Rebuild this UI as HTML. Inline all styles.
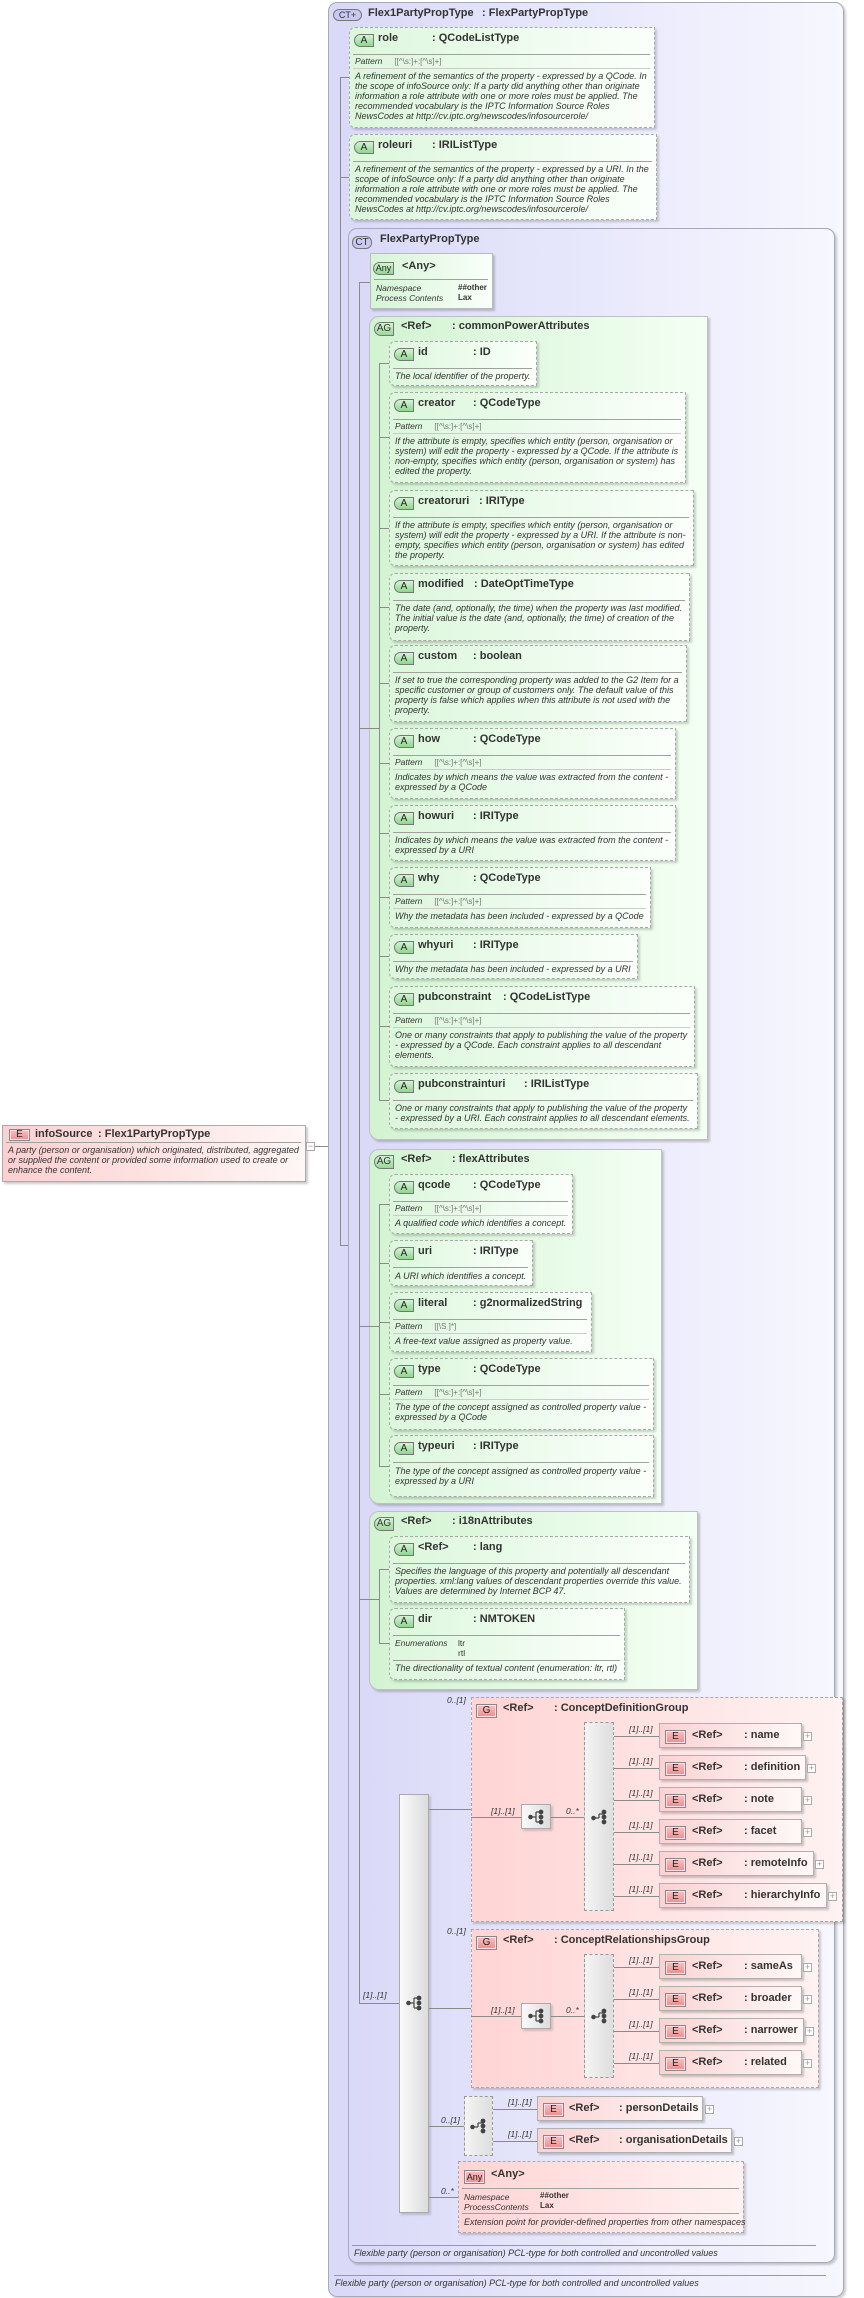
<!DOCTYPE html>
<html><head><meta charset="utf-8"><style>
body{margin:0;width:864px;height:2298px;position:relative;overflow:hidden;background:#fff;font-family:"Liberation Sans",Arial,sans-serif;color:#333}
div,span{box-sizing:border-box}
.p{position:absolute}
.ct{position:absolute;border:1px solid #a8a8b8;border-radius:9px;background:linear-gradient(90deg,#d9d9f8,#f7f7ff);box-shadow:2px 2px 2px rgba(0,0,0,.2)}
.ag{position:absolute;border:1px solid #c0c0c0;border-radius:10px 0 0 10px;background:linear-gradient(90deg,#d2f3d2,#f4fff4);box-shadow:2px 2px 2px rgba(0,0,0,.2)}
.ab{position:absolute;border:1px dashed #a8a8a8;border-radius:6px 0 0 6px;background:linear-gradient(90deg,#dcf7dc,#fbfffb);box-shadow:2px 2px 2px rgba(0,0,0,.18)}
.gb{position:absolute;border:1px dashed #a8a8a8;background:linear-gradient(90deg,#ffd4d4,#fff2f2);box-shadow:2px 2px 2px rgba(0,0,0,.18)}
.eb{position:absolute;border:1px solid #b0b0b0;height:25px;background:linear-gradient(90deg,#fbd2d2,#fff8f8);box-shadow:2px 2px 2px rgba(0,0,0,.2)}
.n{position:absolute;top:4px;left:28px;font-weight:bold;font-size:11px;white-space:nowrap;color:#333}
.t{position:absolute;top:4px;font-weight:bold;font-size:11px;white-space:nowrap;color:#333}
.s{position:absolute;left:3px;right:4px;height:0;border-top:1px solid #a0a0a0}
.pt{position:absolute;left:5px;top:28px;font-size:8.5px;font-style:italic;white-space:nowrap}
.pt span{font-style:normal;color:#777;margin-left:12px;font-size:8px}
.d{position:absolute;left:5px;font-size:9px;line-height:10px;font-style:italic;white-space:nowrap;color:#333}
.bA{position:absolute;left:4px;top:6px;width:20px;height:13px;border:1px solid #777;border-radius:7px 0 0 7px;background:linear-gradient(#d4f4d4,#8fd68f);font-size:10px;line-height:11px;text-align:center;color:#222}
.bE{position:absolute;left:5px;top:6px;width:21px;height:14px;border:1px solid #888;background:linear-gradient(#f9c0c0,#ee8e8e);box-shadow:inset 0 0 0 1px #fde;font-size:10px;line-height:12px;text-align:center;color:#222}
.h{position:absolute;height:1px;background:#8a8a8a}
.v{position:absolute;width:1px;background:#8a8a8a}
.l{position:absolute;font-size:8.5px;font-style:italic;white-space:nowrap;color:#333}
.pl{position:absolute;width:9px;height:9px;border:1px solid #aaa;background:#fff;font-size:9px;line-height:7px;text-align:center;color:#999}
.bar{position:absolute;border:1px solid #aaa;background:linear-gradient(90deg,#fafafa,#dcdcdc);box-shadow:2px 2px 2px rgba(0,0,0,.15)}
.dbar{position:absolute;border:1px dashed #999;background:linear-gradient(90deg,#f4f4f4,#dedede)}
.ic{position:absolute}
</style></head><body>

<!-- infoSource -->
<div class="p" style="left:2px;top:1125px;width:304px;height:57px;border:1px solid #aaa;background:linear-gradient(90deg,#fcd0d0,#fff6f6);box-shadow:2px 2px 2px rgba(0,0,0,.2)">
<div class="bE" style="left:6px;top:3px;height:12px;line-height:10px">E</div>
<div class="n" style="left:32px;top:2px;font-size:11px">infoSource</div>
<div class="t" style="left:95px;top:2px;font-size:11px">: Flex1PartyPropType</div>
<div class="s" style="top:16px"></div>
<div class="d" style="top:19px">A party (person or organisation) which originated, distributed, aggregated<br>or supplied the content or provided some information used to create or<br>enhance the content.</div>
</div>
<div class="pl" style="left:306px;top:1142px">−</div>
<div class="h" style="left:315px;top:1146px;width:25px"></div>

<!-- outer CT -->
<div class="ct" style="left:328px;top:2px;width:516px;height:2295px"></div>
<div class="p" style="left:333px;top:9px;width:29px;height:12px;border:1px solid #777;border-radius:6px;background:#c8c8f0;font-size:9px;line-height:10px;text-align:center">CT+</div>
<div class="p" style="left:368px;top:7px;font-weight:bold;font-size:11px;white-space:nowrap">Flex1PartyPropType</div>
<div class="p" style="left:482px;top:7px;font-weight:bold;font-size:11px;white-space:nowrap">: FlexPartyPropType</div>
<div class="v" style="left:340px;top:77px;height:1169px"></div>
<div class="h" style="left:340px;top:77px;width:9px"></div>
<div class="h" style="left:340px;top:177px;width:9px"></div>

<div class="ab" style="left:349px;top:27px;width:306px;height:101px">
<div class="bA">A</div><div class="n">role</div><div class="t" style="left:82px">: QCodeListType</div>
<div class="s" style="top:26px"></div><div class="pt">Pattern<span>[[^\s:]+:[^\s]+]</span></div><div class="s" style="top:40px;border-color:#ccc"></div>
<div class="d" style="top:43px">A refinement of the semantics of the property - expressed by a QCode. In<br>the scope of infoSource only: If a party did anything other than originate<br>information a role attribute with one or more roles must be applied. The<br>recommended vocabulary is the IPTC Information Source Roles<br>NewsCodes at http://cv.iptc.org/newscodes/infosourcerole/</div>
</div>
<div class="ab" style="left:349px;top:134px;width:308px;height:86px">
<div class="bA">A</div><div class="n">roleuri</div><div class="t" style="left:82px">: IRIListType</div>
<div class="s" style="top:26px"></div>
<div class="d" style="top:29px">A refinement of the semantics of the property - expressed by a URI. In the<br>scope of infoSource only: If a party did anything other than originate<br>information a role attribute with one or more roles must be applied. The<br>recommended vocabulary is the IPTC Information Source Roles<br>NewsCodes at http://cv.iptc.org/newscodes/infosourcerole/</div>
</div>

<!-- inner CT -->
<div class="ct" style="left:348px;top:228px;width:487px;height:2035px"></div>
<div class="h" style="left:340px;top:1245px;width:8px"></div>
<div class="p" style="left:352px;top:236px;width:20px;height:13px;border:1px solid #777;border-radius:6px;background:#c8c8f0;font-size:10px;line-height:11px;text-align:center">CT</div>
<div class="p" style="left:380px;top:233px;font-weight:bold;font-size:11px">FlexPartyPropType</div>
<div class="v" style="left:359px;top:282px;height:1722px"></div>

<!-- Any green -->
<div class="p" style="left:370px;top:253px;width:123px;height:56px;border:1px solid #bbb;background:linear-gradient(90deg,#d6f5d6,#fafffa);box-shadow:2px 2px 2px rgba(0,0,0,.2)">
<div class="bA" style="left:2px;top:8px;width:21px;font-size:9px">Any</div>
<div class="n" style="left:31px;top:6px">&lt;Any&gt;</div>
<div class="s" style="top:25px"></div>
<div class="d" style="top:29px;font-size:8.5px">Namespace<br>Process Contents</div>
<div class="p" style="left:87px;top:29px;font-size:8px;line-height:10px;font-weight:bold">##other<br>Lax</div>
</div>
<div class="h" style="left:359px;top:282px;width:11px"></div>

<!-- commonPowerAttributes -->
<div class="ag" style="left:369px;top:316px;width:339px;height:824px"></div>
<div class="p" style="left:374px;top:322px;width:20px;height:14px;border:1px solid #777;border-radius:7px 0 0 7px;background:linear-gradient(#d4f4d4,#9ad89a);font-size:10px;line-height:12px;text-align:center">AG</div>
<div class="p" style="left:401px;top:320px;font-weight:bold;font-size:11px">&lt;Ref&gt;</div>
<div class="p" style="left:452px;top:320px;font-weight:bold;font-size:11px">: commonPowerAttributes</div>
<div class="h" style="left:359px;top:728px;width:20px"></div>
<div class="v" style="left:379px;top:363px;height:738px"></div>
<div class="h" style="left:379px;top:363px;width:10px"></div>
<div class="h" style="left:379px;top:437px;width:10px"></div>
<div class="h" style="left:379px;top:528px;width:10px"></div>
<div class="h" style="left:379px;top:607px;width:10px"></div>
<div class="h" style="left:379px;top:683px;width:10px"></div>
<div class="h" style="left:379px;top:763px;width:10px"></div>
<div class="h" style="left:379px;top:833px;width:10px"></div>
<div class="h" style="left:379px;top:897px;width:10px"></div>
<div class="h" style="left:379px;top:956px;width:10px"></div>
<div class="h" style="left:379px;top:1026px;width:10px"></div>
<div class="h" style="left:379px;top:1100px;width:10px"></div>

<div class="ab" style="left:389px;top:341px;width:148px;height:45px"><div class="bA">A</div><div class="n">id</div><div class="t" style="left:83px">: ID</div><div class="s" style="top:26px"></div>
<div class="d" style="top:29px">The local identifier of the property.</div></div>

<div class="ab" style="left:389px;top:392px;width:297px;height:91px"><div class="bA">A</div><div class="n">creator</div><div class="t" style="left:83px">: QCodeType</div><div class="s" style="top:26px"></div><div class="pt">Pattern<span>[[^\s:]+:[^\s]+]</span></div><div class="s" style="top:40px;border-color:#ccc"></div>
<div class="d" style="top:43px">If the attribute is empty, specifies which entity (person, organisation or<br>system) will edit the property - expressed by a QCode. If the attribute is<br>non-empty, specifies which entity (person, organisation or system) has<br>edited the property.</div></div>

<div class="ab" style="left:389px;top:490px;width:305px;height:76px"><div class="bA">A</div><div class="n">creatoruri</div><div class="t" style="left:89px">: IRIType</div><div class="s" style="top:26px"></div>
<div class="d" style="top:29px">If the attribute is empty, specifies which entity (person, organisation or<br>system) will edit the property - expressed by a URI. If the attribute is non-<br>empty, specifies which entity (person, organisation or system) has edited<br>the property.</div></div>

<div class="ab" style="left:389px;top:573px;width:301px;height:68px"><div class="bA">A</div><div class="n">modified</div><div class="t" style="left:84px">: DateOptTimeType</div><div class="s" style="top:26px"></div>
<div class="d" style="top:29px">The date (and, optionally, the time) when the property was last modified.<br>The initial value is the date (and, optionally, the time) of creation of the<br>property.</div></div>

<div class="ab" style="left:389px;top:645px;width:298px;height:77px"><div class="bA">A</div><div class="n">custom</div><div class="t" style="left:83px">: boolean</div><div class="s" style="top:26px"></div>
<div class="d" style="top:29px">If set to true the corresponding property was added to the G2 Item for a<br>specific customer or group of customers only. The default value of this<br>property is false which applies when this attribute is not used with the<br>property.</div></div>

<div class="ab" style="left:389px;top:728px;width:287px;height:71px"><div class="bA">A</div><div class="n">how</div><div class="t" style="left:83px">: QCodeType</div><div class="s" style="top:26px"></div><div class="pt">Pattern<span>[[^\s:]+:[^\s]+]</span></div><div class="s" style="top:40px;border-color:#ccc"></div>
<div class="d" style="top:43px">Indicates by which means the value was extracted from the content -<br>expressed by a QCode</div></div>

<div class="ab" style="left:389px;top:805px;width:287px;height:56px"><div class="bA">A</div><div class="n">howuri</div><div class="t" style="left:83px">: IRIType</div><div class="s" style="top:26px"></div>
<div class="d" style="top:29px">Indicates by which means the value was extracted from the content -<br>expressed by a URI</div></div>

<div class="ab" style="left:389px;top:867px;width:262px;height:61px"><div class="bA">A</div><div class="n">why</div><div class="t" style="left:83px">: QCodeType</div><div class="s" style="top:26px"></div><div class="pt">Pattern<span>[[^\s:]+:[^\s]+]</span></div><div class="s" style="top:40px;border-color:#ccc"></div>
<div class="d" style="top:43px">Why the metadata has been included - expressed by a QCode</div></div>

<div class="ab" style="left:389px;top:934px;width:249px;height:45px"><div class="bA">A</div><div class="n">whyuri</div><div class="t" style="left:83px">: IRIType</div><div class="s" style="top:26px"></div>
<div class="d" style="top:29px">Why the metadata has been included - expressed by a URI</div></div>

<div class="ab" style="left:389px;top:986px;width:306px;height:81px"><div class="bA">A</div><div class="n">pubconstraint</div><div class="t" style="left:113px">: QCodeListType</div><div class="s" style="top:26px"></div><div class="pt">Pattern<span>[[^\s:]+:[^\s]+]</span></div><div class="s" style="top:40px;border-color:#ccc"></div>
<div class="d" style="top:43px">One or many constraints that apply to publishing the value of the property<br>- expressed by a QCode. Each constraint applies to all descendant<br>elements.</div></div>

<div class="ab" style="left:389px;top:1073px;width:309px;height:56px"><div class="bA">A</div><div class="n">pubconstrainturi</div><div class="t" style="left:134px">: IRIListType</div><div class="s" style="top:26px"></div>
<div class="d" style="top:29px">One or many constraints that apply to publishing the value of the property<br>- expressed by a URI. Each constraint applies to all descendant elements.</div></div>

<!-- flexAttributes -->
<div class="ag" style="left:369px;top:1149px;width:293px;height:355px"></div>
<div class="p" style="left:374px;top:1155px;width:20px;height:14px;border:1px solid #777;border-radius:7px 0 0 7px;background:linear-gradient(#d4f4d4,#9ad89a);font-size:10px;line-height:12px;text-align:center">AG</div>
<div class="p" style="left:401px;top:1153px;font-weight:bold;font-size:11px">&lt;Ref&gt;</div>
<div class="p" style="left:452px;top:1153px;font-weight:bold;font-size:11px">: flexAttributes</div>
<div class="h" style="left:359px;top:1326px;width:20px"></div>
<div class="v" style="left:379px;top:1204px;height:263px"></div>
<div class="h" style="left:379px;top:1204px;width:10px"></div>
<div class="h" style="left:379px;top:1263px;width:10px"></div>
<div class="h" style="left:379px;top:1322px;width:10px"></div>
<div class="h" style="left:379px;top:1394px;width:10px"></div>
<div class="h" style="left:379px;top:1466px;width:10px"></div>

<div class="ab" style="left:389px;top:1174px;width:184px;height:60px"><div class="bA">A</div><div class="n">qcode</div><div class="t" style="left:83px">: QCodeType</div><div class="s" style="top:26px"></div><div class="pt">Pattern<span>[[^\s:]+:[^\s]+]</span></div><div class="s" style="top:40px;border-color:#ccc"></div>
<div class="d" style="top:43px">A qualified code which identifies a concept.</div></div>
<div class="ab" style="left:389px;top:1240px;width:144px;height:46px"><div class="bA">A</div><div class="n">uri</div><div class="t" style="left:83px">: IRIType</div><div class="s" style="top:26px"></div>
<div class="d" style="top:30px">A URI which identifies a concept.</div></div>
<div class="ab" style="left:389px;top:1292px;width:203px;height:60px"><div class="bA">A</div><div class="n">literal</div><div class="t" style="left:83px">: g2normalizedString</div><div class="s" style="top:26px"></div><div class="pt">Pattern<span>[[\S ]*]</span></div><div class="s" style="top:40px;border-color:#ccc"></div>
<div class="d" style="top:43px">A free-text value assigned as property value.</div></div>
<div class="ab" style="left:389px;top:1358px;width:265px;height:72px"><div class="bA">A</div><div class="n">type</div><div class="t" style="left:83px">: QCodeType</div><div class="s" style="top:26px"></div><div class="pt">Pattern<span>[[^\s:]+:[^\s]+]</span></div><div class="s" style="top:40px;border-color:#ccc"></div>
<div class="d" style="top:43px">The type of the concept assigned as controlled property value -<br>expressed by a QCode</div></div>
<div class="ab" style="left:389px;top:1435px;width:265px;height:62px"><div class="bA">A</div><div class="n">typeuri</div><div class="t" style="left:83px">: IRIType</div><div class="s" style="top:26px"></div>
<div class="d" style="top:30px">The type of the concept assigned as controlled property value -<br>expressed by a URI</div></div>

<!-- i18nAttributes -->
<div class="ag" style="left:369px;top:1511px;width:329px;height:179px"></div>
<div class="p" style="left:374px;top:1517px;width:20px;height:14px;border:1px solid #777;border-radius:7px 0 0 7px;background:linear-gradient(#d4f4d4,#9ad89a);font-size:10px;line-height:12px;text-align:center">AG</div>
<div class="p" style="left:401px;top:1515px;font-weight:bold;font-size:11px">&lt;Ref&gt;</div>
<div class="p" style="left:452px;top:1515px;font-weight:bold;font-size:11px">: i18nAttributes</div>
<div class="h" style="left:359px;top:1599px;width:20px"></div>
<div class="v" style="left:379px;top:1569px;height:75px"></div>
<div class="h" style="left:379px;top:1569px;width:10px"></div>
<div class="h" style="left:379px;top:1643px;width:10px"></div>
<div class="ab" style="left:389px;top:1536px;width:301px;height:67px"><div class="bA">A</div><div class="n">&lt;Ref&gt;</div><div class="t" style="left:83px">: lang</div><div class="s" style="top:26px"></div>
<div class="d" style="top:29px">Specifies the language of this property and potentially all descendant<br>properties. xml:lang values of descendant properties override this value.<br>Values are determined by Internet BCP 47.</div></div>
<div class="ab" style="left:389px;top:1608px;width:236px;height:72px"><div class="bA">A</div><div class="n">dir</div><div class="t" style="left:83px">: NMTOKEN</div><div class="s" style="top:26px"></div>
<div class="d" style="top:29px;font-size:8.5px">Enumerations</div><div class="p" style="left:68px;top:29px;font-size:8.5px;line-height:10px">ltr<br>rtl</div>
<div class="s" style="top:51px"></div>
<div class="d" style="top:54px">The directionality of textual content (enumeration: ltr, rtl)</div></div>

<!-- big sequence bar -->
<div class="bar" style="left:399px;top:1794px;width:30px;height:419px"></div>
<svg class="ic" style="left:406px;top:1995px" width="16" height="16"><g fill="#444" stroke="#444" stroke-width="1.2"><circle cx="2.5" cy="8" r="1.7"/><line x1="2.5" y1="8" x2="8" y2="8"/><line x1="8" y1="3" x2="8" y2="13"/><line x1="8" y1="3" x2="13" y2="3"/><line x1="8" y1="13" x2="13" y2="13"/><circle cx="13" cy="3" r="1.8"/><circle cx="13" cy="8" r="1.8"/><circle cx="13" cy="13" r="1.8"/></g></svg>
<div class="h" style="left:359px;top:2003px;width:40px"></div>
<div class="l" style="left:363px;top:1990px">[1]..[1]</div>

<!-- G1 ConceptDefinitionGroup -->
<div class="l" style="left:447px;top:1695px">0..[1]</div>
<div class="gb" style="left:471px;top:1697px;width:372px;height:225px"></div>
<div class="bE" style="left:476px;top:1704px">G</div>
<div class="p" style="left:503px;top:1702px;font-weight:bold;font-size:11px">&lt;Ref&gt;</div>
<div class="p" style="left:554px;top:1702px;font-weight:bold;font-size:11px">: ConceptDefinitionGroup</div>
<div class="h" style="left:429px;top:1809px;width:42px"></div>
<div class="h" style="left:471px;top:1817px;width:50px"></div>
<div class="l" style="left:491px;top:1806px">[1]..[1]</div>
<div class="bar" style="left:521px;top:1804px;width:30px;height:25px"></div>
<svg class="ic" style="left:528px;top:1809px" width="16" height="16"><g fill="#444" stroke="#444" stroke-width="1.2"><circle cx="2.5" cy="8" r="1.7"/><line x1="2.5" y1="8" x2="8" y2="8"/><line x1="8" y1="3" x2="8" y2="13"/><line x1="8" y1="3" x2="13" y2="3"/><line x1="8" y1="13" x2="13" y2="13"/><circle cx="13" cy="3" r="1.8"/><circle cx="13" cy="8" r="1.8"/><circle cx="13" cy="13" r="1.8"/></g></svg>
<div class="h" style="left:551px;top:1817px;width:33px"></div>
<div class="l" style="left:566px;top:1806px">0..*</div>
<div class="dbar" style="left:584px;top:1722px;width:30px;height:189px"></div>
<svg class="ic" style="left:591px;top:1809px" width="16" height="16"><g fill="#444" stroke="#444" stroke-width="1.2"><circle cx="2.5" cy="9" r="1.7"/><line x1="2.5" y1="9" x2="8" y2="9"/><line x1="8" y1="9" x2="8" y2="5"/><line x1="8" y1="5" x2="12" y2="5"/><line x1="13" y1="3" x2="13" y2="13"/><circle cx="13" cy="3" r="1.8"/><circle cx="13" cy="8" r="1.8"/><circle cx="13" cy="13" r="1.8"/></g></svg>

<div class="h" style="left:614px;top:1736px;width:45px"></div><div class="l" style="left:629px;top:1724px">[1]..[1]</div>
<div class="eb" style="left:659px;top:1723px;width:143px"><div class="bE">E</div><div class="n" style="left:32px;top:5px">&lt;Ref&gt;</div><div class="t" style="left:84px;top:5px">: name</div></div><div class="pl" style="left:803px;top:1732px">+</div>
<div class="h" style="left:614px;top:1768px;width:45px"></div><div class="l" style="left:629px;top:1756px">[1]..[1]</div>
<div class="eb" style="left:659px;top:1755px;width:147px"><div class="bE">E</div><div class="n" style="left:32px;top:5px">&lt;Ref&gt;</div><div class="t" style="left:84px;top:5px">: definition</div></div><div class="pl" style="left:807px;top:1764px">+</div>
<div class="h" style="left:614px;top:1800px;width:45px"></div><div class="l" style="left:629px;top:1788px">[1]..[1]</div>
<div class="eb" style="left:659px;top:1787px;width:143px"><div class="bE">E</div><div class="n" style="left:32px;top:5px">&lt;Ref&gt;</div><div class="t" style="left:84px;top:5px">: note</div></div><div class="pl" style="left:803px;top:1796px">+</div>
<div class="h" style="left:614px;top:1832px;width:45px"></div><div class="l" style="left:629px;top:1820px">[1]..[1]</div>
<div class="eb" style="left:659px;top:1819px;width:143px"><div class="bE">E</div><div class="n" style="left:32px;top:5px">&lt;Ref&gt;</div><div class="t" style="left:84px;top:5px">: facet</div></div><div class="pl" style="left:803px;top:1828px">+</div>
<div class="h" style="left:614px;top:1864px;width:45px"></div><div class="l" style="left:629px;top:1852px">[1]..[1]</div>
<div class="eb" style="left:659px;top:1851px;width:155px"><div class="bE">E</div><div class="n" style="left:32px;top:5px">&lt;Ref&gt;</div><div class="t" style="left:84px;top:5px">: remoteInfo</div></div><div class="pl" style="left:815px;top:1860px">+</div>
<div class="h" style="left:614px;top:1896px;width:45px"></div><div class="l" style="left:629px;top:1884px">[1]..[1]</div>
<div class="eb" style="left:659px;top:1883px;width:168px"><div class="bE">E</div><div class="n" style="left:32px;top:5px">&lt;Ref&gt;</div><div class="t" style="left:84px;top:5px">: hierarchyInfo</div></div><div class="pl" style="left:828px;top:1892px">+</div>

<!-- G2 ConceptRelationshipsGroup -->
<div class="l" style="left:447px;top:1926px">0..[1]</div>
<div class="gb" style="left:471px;top:1929px;width:348px;height:159px"></div>
<div class="bE" style="left:476px;top:1936px">G</div>
<div class="p" style="left:503px;top:1934px;font-weight:bold;font-size:11px">&lt;Ref&gt;</div>
<div class="p" style="left:554px;top:1934px;font-weight:bold;font-size:11px">: ConceptRelationshipsGroup</div>
<div class="h" style="left:429px;top:2008px;width:42px"></div>
<div class="h" style="left:471px;top:2016px;width:50px"></div>
<div class="l" style="left:491px;top:2005px">[1]..[1]</div>
<div class="bar" style="left:521px;top:2003px;width:30px;height:26px"></div>
<svg class="ic" style="left:528px;top:2008px" width="16" height="16"><g fill="#444" stroke="#444" stroke-width="1.2"><circle cx="2.5" cy="8" r="1.7"/><line x1="2.5" y1="8" x2="8" y2="8"/><line x1="8" y1="3" x2="8" y2="13"/><line x1="8" y1="3" x2="13" y2="3"/><line x1="8" y1="13" x2="13" y2="13"/><circle cx="13" cy="3" r="1.8"/><circle cx="13" cy="8" r="1.8"/><circle cx="13" cy="13" r="1.8"/></g></svg>
<div class="h" style="left:551px;top:2016px;width:33px"></div>
<div class="l" style="left:566px;top:2005px">0..*</div>
<div class="dbar" style="left:584px;top:1954px;width:30px;height:124px"></div>
<svg class="ic" style="left:591px;top:2008px" width="16" height="16"><g fill="#444" stroke="#444" stroke-width="1.2"><circle cx="2.5" cy="9" r="1.7"/><line x1="2.5" y1="9" x2="8" y2="9"/><line x1="8" y1="9" x2="8" y2="5"/><line x1="8" y1="5" x2="12" y2="5"/><line x1="13" y1="3" x2="13" y2="13"/><circle cx="13" cy="3" r="1.8"/><circle cx="13" cy="8" r="1.8"/><circle cx="13" cy="13" r="1.8"/></g></svg>

<div class="h" style="left:614px;top:1967px;width:45px"></div><div class="l" style="left:629px;top:1955px">[1]..[1]</div>
<div class="eb" style="left:659px;top:1954px;width:143px"><div class="bE">E</div><div class="n" style="left:32px;top:5px">&lt;Ref&gt;</div><div class="t" style="left:84px;top:5px">: sameAs</div></div><div class="pl" style="left:803px;top:1963px">+</div>
<div class="h" style="left:614px;top:1999px;width:45px"></div><div class="l" style="left:629px;top:1987px">[1]..[1]</div>
<div class="eb" style="left:659px;top:1986px;width:143px"><div class="bE">E</div><div class="n" style="left:32px;top:5px">&lt;Ref&gt;</div><div class="t" style="left:84px;top:5px">: broader</div></div><div class="pl" style="left:803px;top:1995px">+</div>
<div class="h" style="left:614px;top:2031px;width:45px"></div><div class="l" style="left:629px;top:2019px">[1]..[1]</div>
<div class="eb" style="left:659px;top:2018px;width:145px"><div class="bE">E</div><div class="n" style="left:32px;top:5px">&lt;Ref&gt;</div><div class="t" style="left:84px;top:5px">: narrower</div></div><div class="pl" style="left:805px;top:2027px">+</div>
<div class="h" style="left:614px;top:2063px;width:45px"></div><div class="l" style="left:629px;top:2051px">[1]..[1]</div>
<div class="eb" style="left:659px;top:2050px;width:143px"><div class="bE">E</div><div class="n" style="left:32px;top:5px">&lt;Ref&gt;</div><div class="t" style="left:84px;top:5px">: related</div></div><div class="pl" style="left:803px;top:2059px">+</div>

<!-- person / organisation choice -->
<div class="h" style="left:429px;top:2126px;width:35px"></div>
<div class="l" style="left:441px;top:2115px">0..[1]</div>
<div class="dbar" style="left:464px;top:2096px;width:29px;height:60px"></div>
<svg class="ic" style="left:470px;top:2118px" width="16" height="16"><g fill="#444" stroke="#444" stroke-width="1.2"><circle cx="2.5" cy="9" r="1.7"/><line x1="2.5" y1="9" x2="8" y2="9"/><line x1="8" y1="9" x2="8" y2="5"/><line x1="8" y1="5" x2="12" y2="5"/><line x1="13" y1="3" x2="13" y2="13"/><circle cx="13" cy="3" r="1.8"/><circle cx="13" cy="8" r="1.8"/><circle cx="13" cy="13" r="1.8"/></g></svg>
<div class="h" style="left:493px;top:2109px;width:44px"></div><div class="l" style="left:508px;top:2097px">[1]..[1]</div>
<div class="eb" style="left:537px;top:2096px;width:166px"><div class="bE">E</div><div class="n" style="left:31px;top:5px">&lt;Ref&gt;</div><div class="t" style="left:81px;top:5px">: personDetails</div></div><div class="pl" style="left:705px;top:2105px">+</div>
<div class="h" style="left:493px;top:2141px;width:44px"></div><div class="l" style="left:508px;top:2129px">[1]..[1]</div>
<div class="eb" style="left:537px;top:2128px;width:195px"><div class="bE">E</div><div class="n" style="left:31px;top:5px">&lt;Ref&gt;</div><div class="t" style="left:81px;top:5px">: organisationDetails</div></div><div class="pl" style="left:734px;top:2137px">+</div>

<!-- Any pink -->
<div class="h" style="left:429px;top:2197px;width:29px"></div>
<div class="l" style="left:441px;top:2186px">0..*</div>
<div class="gb" style="left:458px;top:2161px;width:286px;height:72px">
<div class="bE" style="left:5px;top:8px;font-size:9px">Any</div>
<div class="n" style="left:32px;top:6px">&lt;Any&gt;</div>
<div class="s" style="top:26px"></div>
<div class="d" style="top:30px;font-size:8.5px">Namespace<br>ProcessContents</div>
<div class="p" style="left:81px;top:29px;font-size:8px;line-height:10px;font-weight:bold">##other<br>Lax</div>
<div class="s" style="top:51px"></div>
<div class="d" style="top:55px">Extension point for provider-defined properties from other namespaces</div>
</div>

<!-- footers -->
<div class="h" style="left:352px;top:2245px;width:464px;background:#999"></div>
<div class="d" style="left:354px;top:2248px">Flexible party (person or organisation) PCL-type for both controlled and uncontrolled values</div>
<div class="h" style="left:334px;top:2275px;width:492px;background:#999"></div>
<div class="d" style="left:335px;top:2278px">Flexible party (person or organisation) PCL-type for both controlled and uncontrolled values</div>

</body></html>
